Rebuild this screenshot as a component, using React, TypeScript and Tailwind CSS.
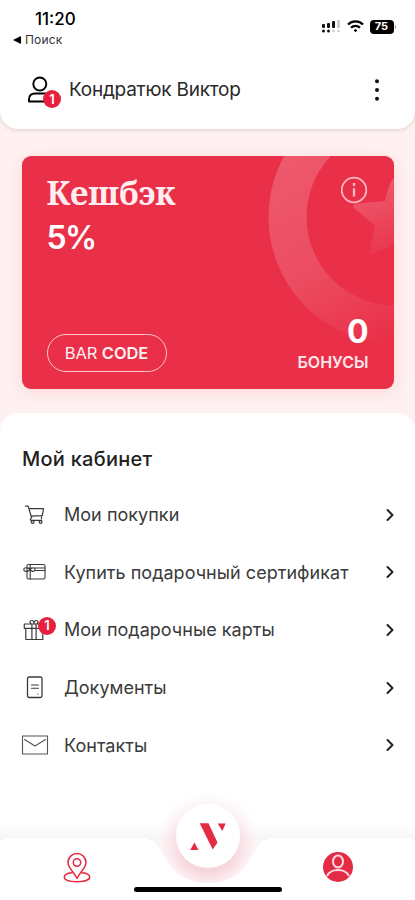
import React from "react";

const stroke = { fill: "none", stroke: "currentColor", strokeLinecap: "round", strokeLinejoin: "round" } as const;

function Badge({ className }: { className: string }) {
  return (
    <span className={`absolute flex h-[18px] w-[18px] items-center justify-center rounded-full bg-[#e8203f] text-[13px] leading-none font-semibold text-white ${className}`}>
      1
    </span>
  );
}

function CartIcon() {
  return (
    <svg width="22" height="22" viewBox="0 0 22 22" {...stroke} strokeWidth="1.2">
      <path d="M1.500 2.200h2.700L7.700 14M5.200 4.700h14.300l-1.200 7-11 .5M7.700 14c-2 .5-1.600 2.400 0 2.400h10M17.500 11.700v3" />
      <circle cx="8.600" cy="18" r="1.400" />
      <circle cx="16.600" cy="18" r="1.400" />
    </svg>
  );
}

function GiftCardIcon() {
  return (
    <svg width="24" height="18" viewBox="0 0 24 18" {...stroke} strokeWidth="1.1">
      <rect x="4" y="1.500" width="18" height="14.500" rx="1.500" />
      <path d="M4 5h18M12 7.500h10M7.200 1.500V16M7 6.700C5 4 .8 4.300.8 6.500S5 9.200 7 6.700C9 4 12 4.300 12 6.500S9 9.200 7 6.700" />
    </svg>
  );
}

function GiftIcon() {
  return (
    <svg width="24" height="24" viewBox="0 0 24 24" {...stroke} strokeWidth="1.2">
      <path d="M1.300 6h20v4.300h-20zM2.800 10.300V21.500h17V10.300M8.900 6v15.500M13.100 6v15.500M11 6H8.300c-2-1.500-1.500-3.500.4-3.500C10 2.500 11 4 11 6Zm0 0h2.700c2-1.500 1.500-3.500-.4-3.500C12 2.500 11 4 11 6Z" />
    </svg>
  );
}

function DocumentIcon() {
  return (
    <svg width="18" height="24" viewBox="0 0 18 24" {...stroke} strokeWidth="1.300">
      <rect x="1.500" y="1" width="14.500" height="20.500" rx="1.800" />
      <path d="M5.500 9h7M5.500 12.200h7M11.700 18h.3" strokeWidth="1.100" />
    </svg>
  );
}

function MailIcon() {
  return (
    <svg width="28" height="20" viewBox="0 0 28 20" {...stroke} strokeWidth="1.100" className="text-[#555]">
      <path d="M1.500 1h25v18h-25zM3.500 4.500 14 11l10.500-6.500" />
    </svg>
  );
}

const rows = [
  { label: "Мои покупки", icon: <CartIcon /> },
  { label: "Купить подарочный сертификат", icon: <GiftCardIcon /> },
  { label: "Мои подарочные карты", icon: <GiftIcon />, badge: true },
  { label: "Документы", icon: <DocumentIcon /> },
  { label: "Контакты", icon: <MailIcon /> },
];

function Header() {
  return (
    <header className="relative h-[129px] rounded-b-[18px] bg-white shadow-[0_1px_4px_rgba(90,50,50,0.18)]">
      <div className="flex h-[60px] justify-between pt-[9px] pr-[19px] pl-[13px]">
        <div>
          <div className="pl-[22px] text-[17px] leading-[21px] font-medium">11:20</div>
          <div className="flex items-center gap-[4px] text-[12px] leading-[20px] tracking-[0.2px] text-[#333]">
            <svg width="8" height="8" viewBox="0 0 8 8"><path d="M0 4 8 0v8z" fill="#000" /></svg>
            Поиск
          </div>
        </div>
        <div className="flex h-[35px] items-center gap-[6px]">
          <svg width="19" height="13" viewBox="0 0 19 13" fill="#111">
            <rect x="0" y="4" width="3" height="4" rx="1" /><rect x="5" y="3" width="3" height="5" rx="1" />
            <rect x="10" y="1" width="3" height="7" rx="1" /><rect x="15" y="0" width="3" height="8" rx="1" fill="#ccc" />
            <circle cx="1.500" cy="11" r="1.500" /><circle cx="6.500" cy="11" r="1.500" />
            <circle cx="11.500" cy="11" r="1.300" fill="#ccc" /><circle cx="16.500" cy="11" r="1.300" fill="#ccc" />
          </svg>
          <svg width="17" height="13" viewBox="0 0 17 13" fill="none" stroke="#000" strokeWidth="2.200">
            <path d="M1 4.500a10.600 10.600 0 0 1 15 0M4 7.800a6.400 6.400 0 0 1 9 0" />
            <path d="m6.600 10.200 1.900 2 1.900-2a2.700 2.700 0 0 0-3.800 0Z" fill="#000" stroke="none" />
          </svg>
          <div className="flex items-center gap-px">
            <span className="flex h-[14px] w-[24px] items-center justify-center rounded-[4px] bg-black text-[11px] font-bold text-white">75</span>
            <span className="h-[4px] w-[1.500px] rounded-r bg-[#999]" />
          </div>
        </div>
      </div>
      <div className="flex h-[60px] items-center pr-[35px] pl-[27px]">
        <div className="relative h-[30px] w-[42px]">
          <svg width="26" height="30" viewBox="0 0 26 30" {...stroke} strokeWidth="1.900">
            <circle cx="12.800" cy="9" r="6.500" />
            <path d="M2 26.500h21.500v-2.300c0-3.800-2.500-5.700-6-5.700H8c-3.800 0-6 2.200-6 5.700z" />
          </svg>
          <Badge className="top-[15px] left-[16px]" />
        </div>
        <span className="flex-1 pt-px text-[19px] tracking-[-0.240px] text-[#292929]">Кондратюк Виктор</span>
        <svg width="6" height="24" viewBox="0 0 6 24" fill="#111">
          <circle cx="3" cy="3.300" r="2" /><circle cx="3" cy="12" r="2" /><circle cx="3" cy="20.700" r="2" />
        </svg>
      </div>
    </header>
  );
}

function CashbackCard() {
  return (
    <section className="relative mx-auto mt-[27px] h-[233px] w-[372px] shrink-0 overflow-hidden rounded-[9px] bg-[#e93048] text-white shadow-[0_3px_16px_rgba(233,60,80,0.14)]">
      <svg className="absolute inset-0" width="372" height="233" viewBox="0 0 372 233">
        <defs>
          <linearGradient id="ring" x1="250" y1="0" x2="355" y2="190" gradientUnits="userSpaceOnUse">
            <stop stopColor="#fff" stopOpacity=".2" /><stop offset=".55" stopColor="#fff" stopOpacity=".14" /><stop offset="1" stopColor="#fff" stopOpacity="0" />
          </linearGradient>
          <linearGradient id="star" x1="340" y1="30" x2="365" y2="105" gradientUnits="userSpaceOnUse">
            <stop stopColor="#fff" stopOpacity=".2" /><stop offset="1" stopColor="#fff" stopOpacity="0.010" />
          </linearGradient>
        </defs>
        <circle cx="373" cy="61" r="107.500" fill="none" stroke="url(#ring)" strokeWidth="38" />
        <path d="M372 22 Q368 24 363 45L333 48q-4 3 0 5l20 17-6 30 25-12z" fill="url(#star)" />
      </svg>
      <div className="relative flex h-full justify-between pt-[18px] pr-[25px] pb-[17px] pl-[25px]">
        <div className="flex flex-col items-start">
          <h1 className="font-['Noto_Serif','Liberation_Serif',serif] text-[32.500px] leading-[38px] font-bold tracking-[-0.150px] text-[#ffedf0]">Кешбэк</h1>
          <div className="mt-[6px] text-[32px] leading-[40px] font-semibold tracking-[-1.600px]">5%</div>
          <button className="mt-auto flex h-[38px] w-[120px] items-center justify-center rounded-full border-[1.500px] border-[#ffc5cf] text-[16.500px] tracking-[-0.100px] whitespace-pre text-[#fff0f2]">
            BAR <b className="font-semibold">CODE</b>
          </button>
        </div>
        <div className="flex flex-col items-end">
          <svg className="mt-[2px]" width="28" height="28" viewBox="0 0 28 28" fill="none" stroke="#ffb6c1">
            <circle cx="13" cy="14" r="12.300" strokeWidth="1.800" /><path d="M13 12.200V20.500M13 7v3" strokeWidth="2.300" />
          </svg>
          <div className="mt-auto text-[32px] leading-[38px] font-bold">0</div>
          <div className="pt-px pb-0 text-[16px] leading-[20px] font-semibold text-[#ffe7eb]">БОНУСЫ</div>
        </div>
      </div>
    </section>
  );
}

function Navigation() {
  return (
    <nav className="relative mt-auto flex h-[96px] shrink-0 justify-between px-[62px] pt-[46px] text-[#e32b43]">
      <svg className="absolute inset-0 overflow-visible" width="415" height="96" viewBox="0 0 415 96">
        <defs>
          <radialGradient id="glow" cx="208" cy="36" r="54" gradientUnits="userSpaceOnUse">
            <stop offset=".58" stopColor="#f6d5dc" /><stop offset=".7" stopColor="#f8dfe4" stopOpacity=".85" /><stop offset=".82" stopColor="#fcecef" stopOpacity=".7" /><stop offset="1" stopColor="#fff" stopOpacity="0" />
          </radialGradient>
          <linearGradient id="fade" x1="0" y1="-18" x2="0" y2="66" gradientUnits="userSpaceOnUse">
            <stop stopColor="#fff" stopOpacity=".15" /><stop offset=".35" stopColor="#fff" stopOpacity=".4" /><stop offset="1" stopColor="#fff" stopOpacity="1" />
          </linearGradient>
          <mask id="soften" maskUnits="userSpaceOnUse" x="150" y="-20" width="116" height="116">
            <path d="M150-20h116V96H150z" fill="url(#fade)" />
          </mask>
          <linearGradient id="edge" x1="0" y1="14" x2="0" y2="36" gradientUnits="userSpaceOnUse">
            <stop stopColor="#fff" stopOpacity="0" /><stop offset="1" stopColor="#f4f4f4" />
          </linearGradient>
        </defs>
        <path d="M0 14h415v22H0z" fill="url(#edge)" />
        <path d="M140 36h136v46H140z" fill="#fbf6f7" />
        <circle cx="208" cy="36" r="54" fill="url(#glow)" mask="url(#soften)" />
        <path d="M0 42Q1 34 8 34H142C168 34 160 79 208 79S248 34 274 34H407Q414 34 415 42V96H0Z" fill="#fff" />
      </svg>
      <svg className="relative" width="30" height="34" viewBox="0 0 30 34" {...stroke} strokeWidth="1.500">
        <path d="M15 28.500C12 22 6 18 6 12.500a9 9 0 0 1 18 0C24 18 18 22 15 28.500Z" />
        <circle cx="15" cy="12.500" r="3.700" />
        <path d="M10 22.800c-4 .4-7.700 1.800-7.700 4.200 0 3.100 5.800 4.700 12.700 4.700S27.700 30 27.700 27c0-2.400-3.700-3.800-7.700-4.200" />
      </svg>
      <svg className="relative" width="30" height="34" viewBox="0 0 30 34">
        <circle cx="15" cy="17" r="15" fill="#e32b43" />
        <g fill="none" stroke="#ffd9df" strokeWidth="2"><ellipse cx="15" cy="11.500" rx="5" ry="6" /><path d="M4 26c2-4 5.500-6 11-6s9 2 11 6" /></g>
      </svg>
      <button className="absolute top-0 left-[176px] flex h-16 w-16 items-center justify-center rounded-full bg-white">
        <svg width="36" height="28" viewBox="0 0 36 28" fill="#e32b43">
          <path d="M9.700 1.300h8.800L27.500 20.500 22.700 27.500ZM27.700 1.500h8l-3.400 7.500ZM.2 28l4.200-7.500L8.500 28Z" />
        </svg>
      </button>
      <div className="absolute bottom-[8px] left-[134px] h-[5px] w-[148px] rounded-full bg-black" />
    </nav>
  );
}

export default function App() {
  return (
    <div className="flex h-[900px] w-[415px] flex-col overflow-hidden bg-[#fff1f1] font-['Inter','Liberation_Sans',sans-serif] text-black">
      <Header />
      <CashbackCard />
      <main className="relative mt-[24px] flex flex-1 flex-col rounded-t-[18px] bg-white pt-[32px]">
        <h2 className="px-[22px] text-[20px] leading-[28px] font-medium tracking-[0.250px] text-[#222]">Мой кабинет</h2>
        <ul className="mt-[13px]">
          {rows.map((row) => (
            <li key={row.label} className="flex h-[57.600px] items-center pr-[17px] pl-[20px] text-[#3a3a3a]">
              <span className="relative flex w-[30px] justify-center">
                {row.icon}
                {row.badge && <Badge className="-top-[1px] left-[18px]" />}
              </span>
              <span className="ml-[14px] flex-1 text-[18px] tracking-[0.030px] whitespace-nowrap">{row.label}</span>
              <svg width="16" height="16" viewBox="0 0 16 16" className="text-[#222]" {...stroke} strokeWidth="2"><path d="m5.500 3 5 5-5 5" /></svg>
            </li>
          ))}
        </ul>
        <Navigation />
      </main>
    </div>
  );
}
